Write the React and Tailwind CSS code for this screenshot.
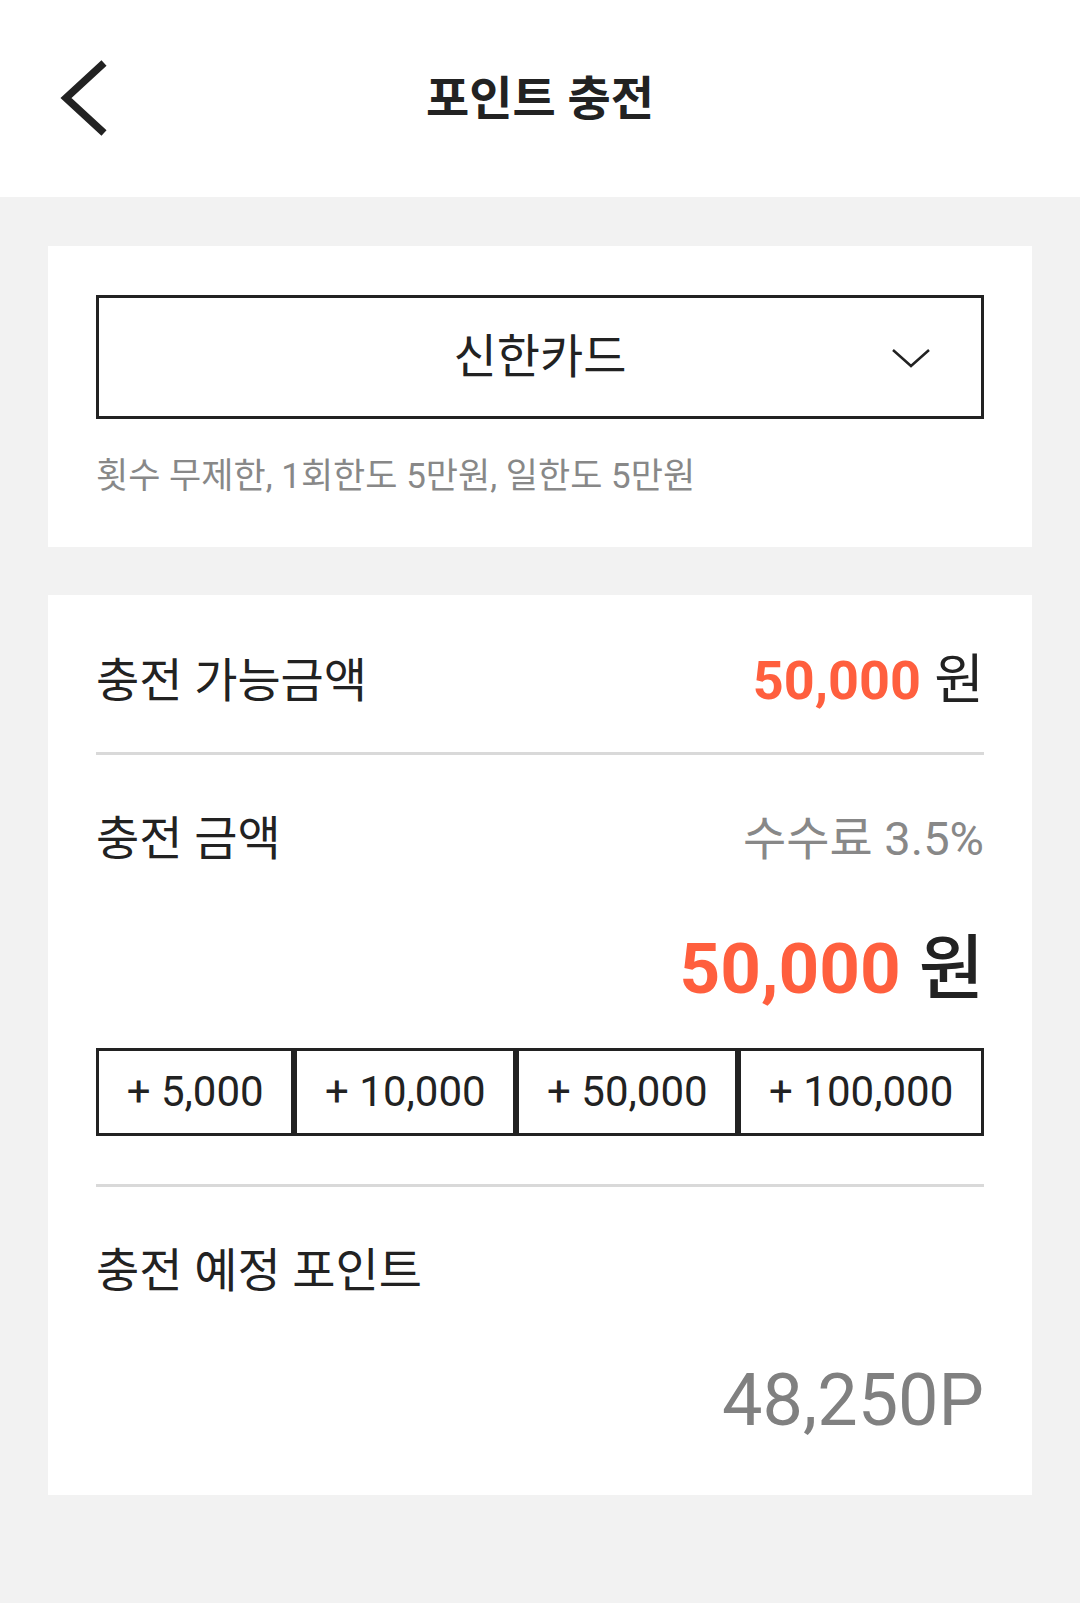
import React, { useState } from "react";

const AMOUNTS = [5000, 10000, 50000, 100000];
const FEE = 0.035;

const fmt = (n) => n.toLocaleString("en-US");

const App = () => {
  const [amount] = useState(50000);
  const points = Math.round(amount * (1 - FEE));

  return (
    <div className="min-h-[1603px] w-full bg-[#f2f2f2] font-['Roboto','Noto_Sans_CJK_KR',sans-serif] text-[#222]">
      {/* Header */}
      <div className="grid h-[197px] grid-cols-[1fr_auto_1fr] items-center bg-white">
        <button className="flex h-[197px] items-center pl-[60px]">
          <svg width="50" height="80" viewBox="0 0 50 80" fill="none">
            <polyline
              points="44,4 6,39 44,74"
              stroke="#222"
              strokeWidth="7.5"
              strokeLinejoin="miter"
            />
          </svg>
        </button>
        <h1 className="text-[47px] font-bold leading-[52px]">포인트 충전</h1>
        <div />
      </div>

      {/* Card select */}
      <div className="mx-[48px] mt-[49px] bg-white px-[48px] pb-[50px] pt-[49px]">
        <div className="relative flex h-[124px] items-center justify-center border-[3px] border-[#222]">
          <span className="text-[47px] leading-[52px]">신한카드</span>
          <svg
            className="absolute right-[51px] top-[50px]"
            width="38"
            height="20"
            viewBox="0 0 38 20"
            fill="none"
          >
            <polyline points="1,2 19,18 37,2" stroke="#222" strokeWidth="2.5" />
          </svg>
        </div>
        <p className="mt-[38px] text-[35px] leading-[40px] text-[#888]">
          횟수 무제한, 1회한도 5만원, 일한도 5만원
        </p>
      </div>

      {/* Amount */}
      <div className="mx-[48px] mt-[48px] bg-white px-[48px] pb-[49px] pt-[62px]">
        <div className="mb-[47px] flex h-[48px] items-center justify-between">
          <span className="text-[47px] leading-[48px]">충전 가능금액</span>
          <span className="text-[54px] leading-[48px]">
            <span className="font-bold text-[#ff5f3e]">50,000</span> 원
          </span>
        </div>
        <div className="h-[3px] bg-[#d9d9d9]" />

        <div className="mt-[60px] flex h-[48px] items-center justify-between">
          <span className="text-[47px] leading-[48px]">충전 금액</span>
          <span className="text-[47px] leading-[48px] text-[#888]">수수료 3.5%</span>
        </div>
        <div className="mt-[61px] flex h-[90px] items-center justify-end text-[71px] leading-[90px]">
          <span className="font-bold text-[#ff5f3e]">{fmt(amount)}</span>
          <span className="ml-[18px] font-medium">원</span>
        </div>

        <div className="mt-[34px] flex h-[88px]">
          {AMOUNTS.map((a) => (
            <button
              key={a}
              className="flex flex-auto items-center justify-center border-[3px] border-[#222] px-[24px] text-[42px] leading-[48px]"
            >
              + {fmt(a)}
            </button>
          ))}
        </div>

        <div className="mt-[48px] h-[3px] bg-[#d9d9d9]" />

        <div className="mt-[60px] h-[48px] text-[47px] leading-[48px]">충전 예정 포인트</div>
        <div className="mt-[61px] h-[90px] text-right text-[72px] leading-[90px] text-[#808080]">
          {fmt(points)}P
        </div>
      </div>
    </div>
  );
};

export default App;
